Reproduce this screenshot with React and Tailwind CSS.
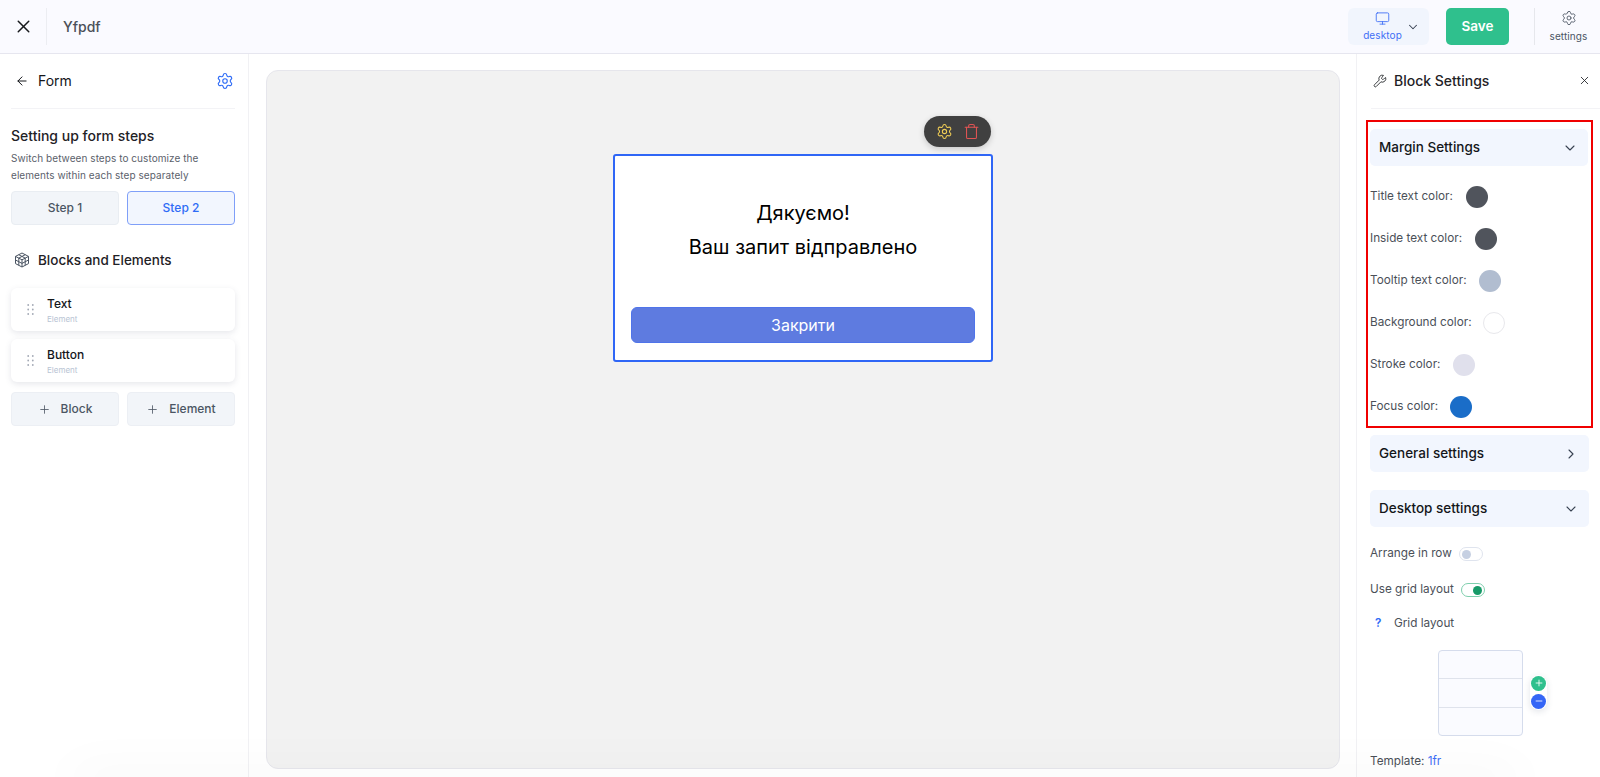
import React from "react";
import { X, ArrowLeft, Settings, Wrench, Monitor, ChevronDown, ChevronRight, Trash, Plus, Minus } from "lucide-react";

const colors = [
  ["Title text color:", "bg-[#50545c]", 83],
  ["Inside text color:", "bg-[#50545c]", 92],
  ["Tooltip text color:", "bg-[#b1bdd0]", 96],
  ["Background color:", "bg-white border border-[#e8e8ec]", 100],
  ["Stroke color:", "bg-[#e0e0ec]", 70],
  ["Focus color:", "bg-[#1a6dc8]", 67],
];

function CubeGrid() {
  return (
    <svg width="16" height="16" viewBox="0 0 16 16" fill="none" stroke="#4b5563" strokeWidth="1">
      <path d="M8 1 14.5 4.4v7.2L8 15 1.5 11.6V4.4Z" />
      <path d="M1.5 4.4 8 7.8l6.5-3.4M8 7.8V15" />
      <path d="M4.7 2.7 11.2 6.1v7.2M11.3 2.7 4.8 6.1v7.2" />
      <path d="M1.5 8 8 11.4 14.5 8" />
    </svg>
  );
}

function Dots() {
  return (
    <svg width="7" height="11" viewBox="0 0 7 11" fill="#a3a9b5">
      {[1, 5.5, 10].map((y) => (
        <React.Fragment key={y}>
          <circle cx="1.2" cy={y} r="0.9" />
          <circle cx="5.8" cy={y} r="0.9" />
        </React.Fragment>
      ))}
    </svg>
  );
}

function ElementCard({ name }) {
  return (
    <div className="h-[43px] rounded-[6px] bg-white shadow-[0_2px_6px_rgba(60,70,100,0.13)] flex items-center pl-[16px]">
      <Dots />
      <div className="ml-[13px]">
        <div className="text-[12px] leading-[15px] font-medium text-[#14161a]">{name}</div>
        <div className="text-[8px] leading-[10px] mt-[3px] text-[#b9c4d4]">Element</div>
      </div>
    </div>
  );
}

function AddButton({ label }) {
  return (
    <div className="flex-1 h-[34px] rounded-[4px] bg-[#f2f5f9] border border-[#eceff4] flex items-center justify-center gap-[10px] text-[12px] font-[450] text-[#4b5563]">
      <Plus size={13} strokeWidth={1.5} />
      <span>{label}</span>
    </div>
  );
}

function SectionHead({ title, open }) {
  return (
    <div className="h-[37px] rounded-[5px] bg-[#f2f6fe] flex items-center justify-between pl-[9px] pr-[10px] text-[13.5px] font-[450] text-[#14161a]">
      <span>{title}</span>
      {open ? <ChevronDown size={16} strokeWidth={1.6} color="#374151" /> : <ChevronRight size={16} strokeWidth={1.6} color="#374151" />}
    </div>
  );
}

export default function App() {
  return (
    <div className="relative h-[777px] w-[1600px] overflow-hidden bg-white flex flex-col font-['Inter',sans-serif]">
      <header className="h-[54px] shrink-0 bg-[#fafaff] border-b border-[#e6e6ef] flex items-center">
        <div className="w-[47px] h-[37px] border-r border-[#ecedf2] flex items-center justify-center pl-[1px]">
          <X size={21} strokeWidth={1.7} color="#17191c" />
        </div>
        <div className="ml-[16px] text-[14px] font-medium text-[#4b5058]">Yfpdf</div>
        <div className="ml-auto flex items-center">
          <div className="w-[81px] h-[37px] rounded-[6px] bg-[#f1f5fd] flex items-center pl-[15px]">
            <div className="flex flex-col items-center w-[39px]">
              <Monitor size={15} strokeWidth={1.4} color="#3f6ff6" />
              <span className="text-[10px] tracking-[0.1px] leading-[14px] mt-[2px] text-[#3f6ff6]">desktop</span>
            </div>
            <ChevronDown size={14} strokeWidth={1.8} color="#374151" className="ml-[4px]" />
          </div>
          <div className="ml-[17px] w-[63px] h-[37px] rounded-[5px] bg-[#2fc08d] flex items-center justify-center text-[13.5px] font-semibold text-white">Save</div>
          <div className="ml-[25px] w-[66px] h-[37px] border-l border-[#e6e7ec] flex flex-col items-center pl-[2px] text-[#4b5563]">
            <Settings size={16} strokeWidth={1.3} className="mt-[2px]" />
            <span className="text-[10px] tracking-[0.1px] leading-[14px] mt-[3px]">settings</span>
          </div>
        </div>
      </header>

      <div className="flex-1 flex min-h-0">
        <aside className="w-[249px] shrink-0 border-r border-[#f1f1f4] pl-[11px] pr-[13px]">
          <div className="h-[55px] border-b border-[#f3f3f6] flex items-center pb-[1px] text-[14px] text-[#14161a]">
            <ArrowLeft size={14} strokeWidth={1.7} className="ml-[4px]" />
            <span className="ml-[9px]">Form</span>
            <Settings size={18} strokeWidth={1.5} color="#2f6cf6" className="ml-auto mr-px" />
          </div>
          <div className="mt-[17px] text-[14px] leading-[20px] font-[450] text-[#1f2226]">Setting up form steps</div>
          <div className="mt-[4px] text-[10px] tracking-[0.06px] leading-[17px] text-[#5b616b]">
            Switch between steps to customize the<br />elements within each step separately
          </div>
          <div className="mt-[7px] flex gap-[8px]">
            <div className="flex-1 h-[34px] rounded-[4px] bg-[#f2f5f9] border border-[#e9edf2] flex items-center justify-center text-[12px] font-[450] text-[#4b5563]">Step 1</div>
            <div className="flex-1 h-[34px] rounded-[4px] bg-[#f2f6fe] border border-[#7f9ff8] flex items-center justify-center text-[12px] font-[450] text-[#2f6cf6]">Step 2</div>
          </div>
          <div className="mt-[25px] h-[20px] flex items-center text-[13.5px] font-[450] text-[#1f2226]">
            <span className="ml-[3px]"><CubeGrid /></span>
            <span className="ml-[8px]">Blocks and Elements</span>
          </div>
          <div className="mt-[18px] flex flex-col gap-[8px]">
            <ElementCard name="Text" />
            <ElementCard name="Button" />
          </div>
          <div className="mt-[10px] flex gap-[8px]">
            <AddButton label="Block" />
            <AddButton label="Element" />
          </div>
        </aside>

        <main className="flex-1 min-w-0 pl-[17px] pr-[16px] pt-[16px] pb-[8px]">
          <div className="h-full rounded-[12px] bg-[#f2f2f2] border border-[#e6e6ec] pt-[83px]">
            <div className="relative w-[380px] h-[208px] mx-auto rounded-[3px] bg-white border-2 border-[#2f66f6] flex flex-col">
              <div className="absolute right-[0px] top-[-40px] w-[67px] h-[31px] rounded-full bg-[#404040] shadow-[0_2px_6px_rgba(0,0,0,0.18)] flex items-center justify-center gap-[10px]">
                <Settings size={17} strokeWidth={1.5} color="#f0cd55" />
                <Trash size={17} strokeWidth={1.5} color="#e05454" />
              </div>
              <div className="mt-[40px] text-center text-[20px] leading-[34px] text-black">
                Дякуємо!<br />Ваш запит відправлено
              </div>
              <div className="mt-[43px] mx-[16px] h-[36px] rounded-[6px] bg-[#5e7be0] border border-[#4f74ea] flex items-center justify-center text-[16px] text-white">Закрити</div>
            </div>
          </div>
        </main>

        <aside className="w-[244px] shrink-0 border-l border-[#f1f1f4] pl-[13px] overflow-hidden">
          <div className="h-[55px] ml-px border-b border-[#f3f3f6] flex items-center pb-[1px] text-[14px] font-[450] text-[#1f2226]">
            <Wrench size={14} strokeWidth={1.5} className="ml-[2px]" />
            <span className="ml-[7px]">Block Settings</span>
            <X size={13} strokeWidth={1.6} className="ml-auto mr-[9px]" />
          </div>
          <div className="mt-[11px] mr-[7px] -ml-[4px] pl-[2px] pr-[3px] pt-[7px] h-[308px] border-2 border-[#f00000]">
            <SectionHead title="Margin Settings" open />
            <div className="mt-[20px] flex flex-col gap-[20px]">
              {colors.map(([label, color, width]) => (
                <div key={label} className="h-[22px] flex items-center text-[11.75px] text-[#4b5058]">
                  <span className="whitespace-nowrap" style={{ width }}>{label}</span>
                  <span className={`ml-[13px] w-[22px] h-[22px] rounded-full ${color}`} />
                </div>
              ))}
            </div>
          </div>
          <div className="mr-[11px]">
            <div className="mt-[7px]"><SectionHead title="General settings" /></div>
            <div className="mt-[18px]"><SectionHead title="Desktop settings" open /></div>
            <div className="mt-[19px] h-[16px] flex items-center text-[11.75px] text-[#4b5058]">
              <span>Arrange in row</span>
              <span className="ml-[7px] w-[24px] h-[14px] rounded-full bg-white border border-[#dfe4ee] flex items-center pl-[2px]">
                <span className="w-[9px] h-[9px] rounded-full bg-[#c6d0e2]" />
              </span>
            </div>
            <div className="mt-[20px] h-[16px] flex items-center text-[11.75px] text-[#4b5058]">
              <span>Use grid layout</span>
              <span className="ml-[7px] w-[24px] h-[14px] rounded-full bg-white border border-[#7fcfae] flex items-center justify-end pr-[2px]">
                <span className="w-[9px] h-[9px] rounded-full bg-[#179a68]" />
              </span>
            </div>
            <div className="mt-[18px] h-[16px] flex items-center text-[11.75px] text-[#4b5058]">
              <span className="ml-[5px] w-[6px] font-semibold text-[#2f6cf6]">?</span>
              <span className="ml-[13px]">Grid layout</span>
            </div>
            <div className="mt-[18px] ml-[68px] flex items-center">
              <div className="w-[85px] h-[86px] rounded-[4px] bg-[#fafbff] border border-[#d5dcec] flex flex-col divide-y divide-[#dfe3ec]">
                <div className="flex-1" />
                <div className="flex-1" />
                <div className="flex-1" />
              </div>
              <div className="ml-[7px] mb-[2px] flex flex-col gap-[3px] rounded-full bg-white p-[1px] shadow-[0_2px_6px_rgba(60,70,100,0.14)]">
                <span className="w-[15px] h-[15px] rounded-full bg-[#2fc08d] flex items-center justify-center"><Plus size={10} strokeWidth={2} color="white" /></span>
                <span className="w-[15px] h-[15px] rounded-full bg-[#3566f6] flex items-center justify-center"><Minus size={10} strokeWidth={2} color="white" /></span>
              </div>
            </div>
            <div className="mt-[17px] text-[11.75px] leading-[16px] text-[#4b5058]">
              Template: <span className="text-[#3f6ff6]">1fr</span>
            </div>
          </div>
        </aside>
      </div>

      <div className="absolute left-[70px] right-[80px] bottom-[-6px] h-[6px] shadow-[0_0_50px_rgba(0,0,0,0.14)]" />
    </div>
  );
}
